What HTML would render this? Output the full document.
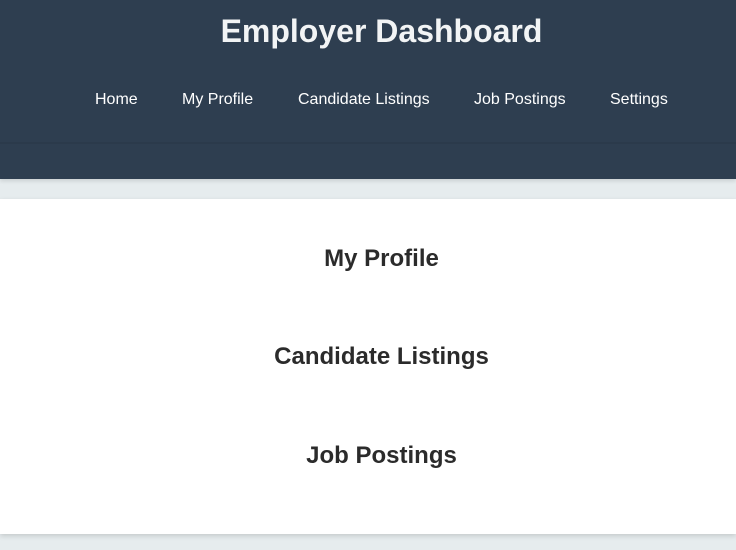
<!DOCTYPE html>
<html><head><style>
body{margin:0;width:736px;height:550px;overflow:hidden;background:#e6ecee;font-family:"Liberation Sans",Arial,sans-serif;position:relative}
.hdr{position:absolute;left:0;top:0;width:736px;height:179px;background:#2e3e50;box-shadow:0 2px 4px rgba(0,0,0,.12)}
.line{position:absolute;left:0;top:142px;width:736px;height:2px;background:#2b3a4b}
h1{position:absolute;margin:0;top:13px;left:0;width:763px;text-align:center;color:#f2f4f5;font-size:32px;font-weight:bold}
.nav a{position:absolute;top:91px;color:#fff;font-size:16px;text-decoration:none}
.box{position:absolute;left:0;top:199px;width:736px;height:335px;background:#fff;box-shadow:0 2px 5px rgba(0,0,0,.15)}
h2{position:absolute;margin:0;left:0;width:763px;text-align:center;color:#2b2b2b;font-size:24px;font-weight:bold}
</style></head><body>
<div class="hdr"><div class="line"></div>
<h1>Employer Dashboard</h1>
<div class="nav">
<a style="left:95px">Home</a>
<a style="left:182px">My Profile</a>
<a style="left:298px">Candidate Listings</a>
<a style="left:474px">Job Postings</a>
<a style="left:610px">Settings</a>
</div></div>
<div class="box">
<h2 style="top:46px">My Profile</h2>
<h2 style="top:144px">Candidate Listings</h2>
<h2 style="top:243px">Job Postings</h2>
</div>
</body></html>
